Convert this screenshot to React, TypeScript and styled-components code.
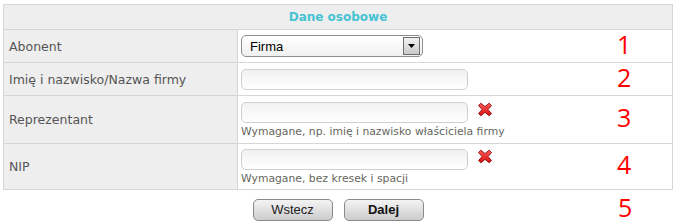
import styled, { createGlobalStyle } from "styled-components";

const GlobalStyle = createGlobalStyle`
  body {
    margin: 0;
    padding: 4px 0 0 3px;
    background: #fff;
    font-family: "DejaVu Sans", Verdana, sans-serif;
  }
`;

type Field = {
  label: string;
  kind: "select" | "input";
  value?: string;
  hint?: string;
  required?: boolean;
  height: number;
};

const fields: Field[] = [
  { label: "Abonent", kind: "select", value: "Firma", height: 32 },
  { label: "Imię i nazwisko/Nazwa firmy", kind: "input", height: 32 },
  {
    label: "Reprezentant",
    kind: "input",
    required: true,
    hint: "Wymagane, np. imię i nazwisko właściciela firmy",
    height: 47,
  },
  {
    label: "NIP",
    kind: "input",
    required: true,
    hint: "Wymagane, bez kresek i spacji",
    height: 45,
  },
];

function ErrorMark() {
  return (
    <ErrorIcon viewBox="0 0 16 15" width="16" height="15">
      <defs>
        <linearGradient id="xg" x1="0" y1="0" x2="0" y2="1">
          <stop offset="0" stopColor="#ff5a5a" />
          <stop offset="1" stopColor="#d40f0f" />
        </linearGradient>
      </defs>
      <path
        d="M1.5 3.5 L3.8 1.2 L8 4.6 L12.2 1.2 L14.5 3.5 L11 7.5 L14.5 11.5 L12.2 13.8 L8 10.4 L3.8 13.8 L1.5 11.5 L5 7.5 Z"
        fill="url(#xg)"
        stroke="#8a0d0d"
        strokeWidth="0.9"
        strokeLinejoin="round"
      />
    </ErrorIcon>
  );
}

export default function App() {
  return (
    <>
      <GlobalStyle />
      <Wrapper>
        <Panel>
          <Header>Dane osobowe</Header>
          {fields.map((f, i) => (
            <Row key={f.label} $height={f.height}>
              <LabelCell>{f.label}</LabelCell>
              <ValueCell>
                <Controls>
                  <ControlLine>
                    {f.kind === "select" ? (
                      <SelectWrap>
                        <Select defaultValue={f.value}>
                          <option>Firma</option>
                          <option>Osoba prywatna</option>
                        </Select>
                        <SelectArrow>
                          <svg width="7" height="4" viewBox="0 0 7 4">
                            <path d="M0 0 H7 L3.5 4 Z" fill="#000" />
                          </svg>
                        </SelectArrow>
                      </SelectWrap>
                    ) : (
                      <TextInput type="text" />
                    )}
                    {f.required && <ErrorMark />}
                  </ControlLine>
                  {f.hint && <Hint>{f.hint}</Hint>}
                </Controls>
                <StepNumber>{i + 1}</StepNumber>
              </ValueCell>
            </Row>
          ))}
        </Panel>
        <Footer>
          <span />
          <Buttons>
            <Button>Wstecz</Button>
            <Button $primary>Dalej</Button>
          </Buttons>
          <FooterNumber>5</FooterNumber>
        </Footer>
      </Wrapper>
    </>
  );
}

const Wrapper = styled.div`
  width: 670px;
`;

const Panel = styled.div`
  border: 1px solid #d6d6d6;
  background: #fff;
`;

const Header = styled.div`
  height: 24px;
  display: flex;
  align-items: center;
  justify-content: center;
  background: #eeeeee;
  border-bottom: 1px solid #d6d6d6;
  color: #45c3d3;
  font-size: 12px;
  font-weight: bold;
`;

const Row = styled.div<{ $height: number }>`
  display: grid;
  grid-template-columns: 234px 1fr;
  height: ${({ $height }) => $height}px;
  border-bottom: 1px solid #d6d6d6;

  &:last-child {
    border-bottom: none;
  }
`;

const LabelCell = styled.div`
  display: flex;
  align-items: center;
  padding-left: 5px;
  background: #eeeeee;
  border-right: 1px solid #d6d6d6;
  color: #555;
  font-size: 12.5px;
`;

const ValueCell = styled.div`
  display: grid;
  grid-template-columns: 1fr 55px;
  align-items: center;
  padding-left: 3px;
`;

const Controls = styled.div`
  display: flex;
  flex-direction: column;
  gap: 3px;
`;

const ControlLine = styled.div`
  display: flex;
  align-items: flex-start;
  gap: 9px;
`;

const SelectWrap = styled.div`
  position: relative;
  width: 182px;
  height: 22px;
`;

const Select = styled.select`
  appearance: none;
  box-sizing: border-box;
  width: 100%;
  height: 100%;
  margin: 0;
  padding: 0 0 0 8px;
  border: 1px solid #8c8c8c;
  border-radius: 5px;
  background: linear-gradient(to bottom, #ffffff, #f0f0f0);
  color: #000;
  font-family: "Liberation Sans", Arial, sans-serif;
  font-size: 13px;
  outline: none;
`;

const SelectArrow = styled.span`
  position: absolute;
  right: 3px;
  top: 2px;
  box-sizing: border-box;
  width: 17px;
  height: 18px;
  display: flex;
  align-items: center;
  justify-content: center;
  border: 1px solid #6e6e6e;
  background: linear-gradient(to bottom, #f2f2f2, #c9c9c9);
  pointer-events: none;
`;

const TextInput = styled.input`
  box-sizing: border-box;
  width: 227px;
  height: 21px;
  margin: 0;
  padding: 0 6px;
  border: 1px solid #cfcfcf;
  border-radius: 5px;
  background: linear-gradient(to bottom, #f1f1f1, #ffffff);
  font-family: "Liberation Sans", Arial, sans-serif;
  font-size: 13px;
  outline: none;
`;

const ErrorIcon = styled.svg`
  display: block;
  flex: none;
`;

const Hint = styled.div`
  color: #66665c;
  font-size: 10.8px;
  line-height: 12px;
`;

const StepNumber = styled.div`
  color: #ff0000;
  font-family: "Open Sans", sans-serif;
  font-size: 25px;
  line-height: 24px;
  margin-bottom: 5px;
`;

const Footer = styled.div`
  display: grid;
  grid-template-columns: 1fr auto 1fr;
  align-items: center;
  margin-top: 5px;
`;

const Buttons = styled.div`
  display: flex;
  gap: 11px;
`;

const Button = styled.button<{ $primary?: boolean }>`
  box-sizing: border-box;
  width: 80px;
  height: 22px;
  margin: 0;
  padding: 0;
  border: 1px solid #8a8a8a;
  border-radius: 5px;
  background: linear-gradient(to bottom, #f4f4f4, #cccccc);
  color: ${({ $primary }) => ($primary ? "#111" : "#222")};
  font-family: "Liberation Sans", Arial, sans-serif;
  font-size: 13px;
  font-weight: ${({ $primary }) => ($primary ? "bold" : "normal")};
`;

const FooterNumber = styled(StepNumber)`
  justify-self: end;
  width: 55px;
  margin-bottom: 5px;
`;
